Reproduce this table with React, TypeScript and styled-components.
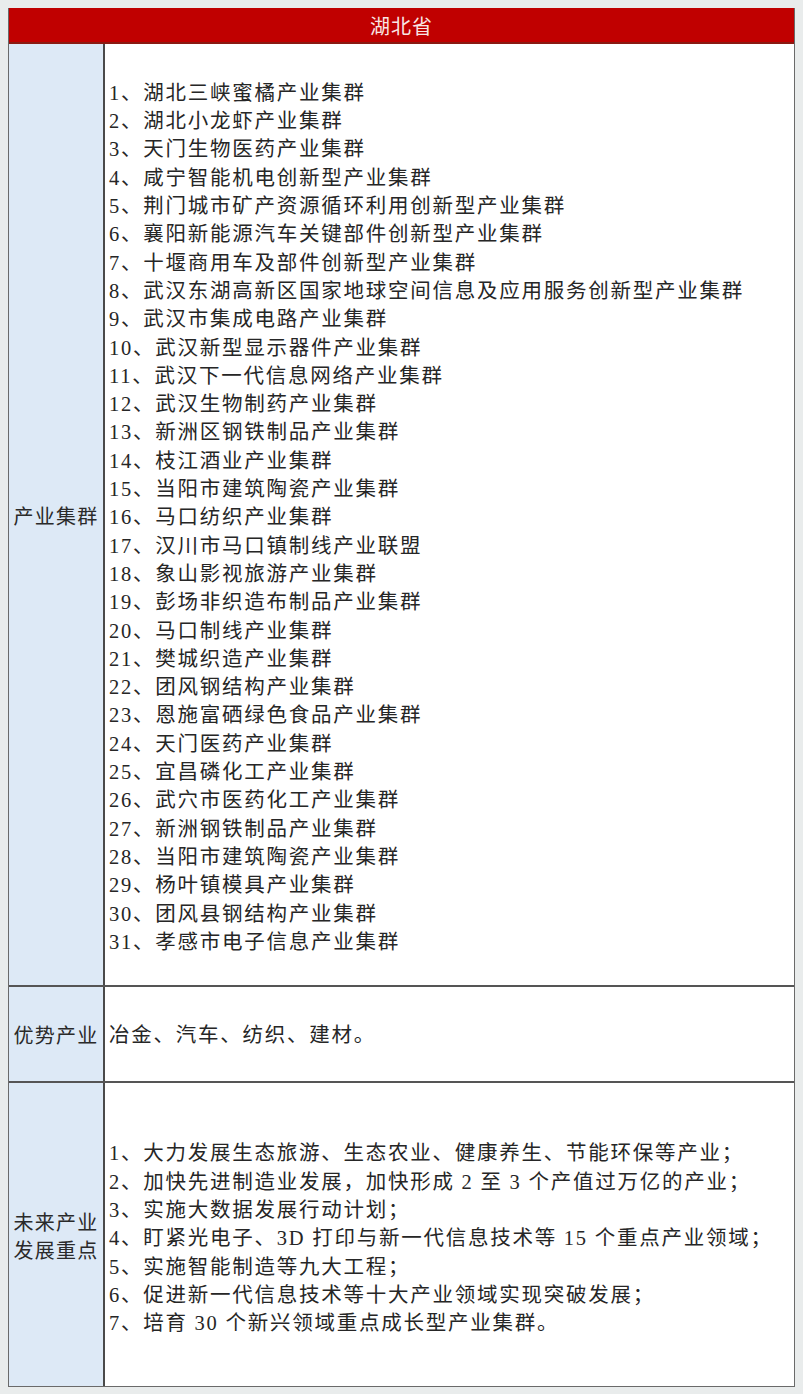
import React from 'react';
import styled, { createGlobalStyle } from 'styled-components';

const GlobalStyle = createGlobalStyle`
  html, body {
    margin: 0;
    padding: 0;
    background: #e9ecec;
  }
  body {
    font-family: "Liberation Serif", "Noto Sans CJK SC", serif;
    color: #232323;
  }
`;

const Page = styled.div`
  padding: 8px;
`;

const Table = styled.div`
  width: 787px;
  border: 1px solid #6a6a6a;
  border-top: none;
  background: #fff;
  box-sizing: border-box;
`;

const Header = styled.div`
  height: 36px;
  background: #c00000;
  border-bottom: 2px solid #8a1a12;
  box-sizing: border-box;
  display: flex;
  align-items: center;
  justify-content: center;
  color: #f8e6e4;
  font-family: "Noto Sans CJK SC", sans-serif;
  font-size: 20px;
  letter-spacing: 1px;
`;

const Row = styled.div<{ $height: number; $last?: boolean }>`
  display: grid;
  grid-template-columns: 96px 1fr;
  height: ${p => p.$height}px;
  border-bottom: ${p => (p.$last ? 'none' : '2px solid #555')};
  box-sizing: border-box;
`;

const Label = styled.div`
  background: #dde9f6;
  border-right: 2px solid #4a4a4a;
  display: flex;
  align-items: center;
  justify-content: center;
  text-align: center;
  padding-top: 2px;
  font-family: "Noto Sans CJK SC", sans-serif;
  font-size: 20px;
  line-height: 28px;
  letter-spacing: 1.3px;
  color: #2a2a2a;
`;

const Content = styled.div<{ $shift: number }>`
  display: flex;
  flex-direction: column;
  justify-content: center;
  padding-left: 4px;
  padding-top: ${p => p.$shift}px;
  font-size: 20.5px;
  line-height: 28.3px;
  letter-spacing: 1.75px;
  color: #262626;
`;

const Line = styled.div`
  white-space: nowrap;
`;

const clusters = [
  '湖北三峡蜜橘产业集群',
  '湖北小龙虾产业集群',
  '天门生物医药产业集群',
  '咸宁智能机电创新型产业集群',
  '荆门城市矿产资源循环利用创新型产业集群',
  '襄阳新能源汽车关键部件创新型产业集群',
  '十堰商用车及部件创新型产业集群',
  '武汉东湖高新区国家地球空间信息及应用服务创新型产业集群',
  '武汉市集成电路产业集群',
  '武汉新型显示器件产业集群',
  '武汉下一代信息网络产业集群',
  '武汉生物制药产业集群',
  '新洲区钢铁制品产业集群',
  '枝江酒业产业集群',
  '当阳市建筑陶瓷产业集群',
  '马口纺织产业集群',
  '汉川市马口镇制线产业联盟',
  '象山影视旅游产业集群',
  '彭场非织造布制品产业集群',
  '马口制线产业集群',
  '樊城织造产业集群',
  '团风钢结构产业集群',
  '恩施富硒绿色食品产业集群',
  '天门医药产业集群',
  '宜昌磷化工产业集群',
  '武穴市医药化工产业集群',
  '新洲钢铁制品产业集群',
  '当阳市建筑陶瓷产业集群',
  '杨叶镇模具产业集群',
  '团风县钢结构产业集群',
  '孝感市电子信息产业集群',
];

const futures = [
  '大力发展生态旅游、生态农业、健康养生、节能环保等产业；',
  '加快先进制造业发展，加快形成 2 至 3 个产值过万亿的产业；',
  '实施大数据发展行动计划；',
  '盯紧光电子、3D 打印与新一代信息技术等 15 个重点产业领域；',
  '实施智能制造等九大工程；',
  '促进新一代信息技术等十大产业领域实现突破发展；',
  '培育 30 个新兴领域重点成长型产业集群。',
];

export default function App() {
  return (
    <Page>
      <GlobalStyle />
      <Table>
        <Header>湖北省</Header>
        <Row $height={943}>
          <Label>产业集群</Label>
          <Content $shift={6}>
            {clusters.map((c, i) => (
              <Line key={i}>{`${i + 1}、${c}`}</Line>
            ))}
          </Content>
        </Row>
        <Row $height={96}>
          <Label>优势产业</Label>
          <Content $shift={2}>
            <Line>冶金、汽车、纺织、建材。</Line>
          </Content>
        </Row>
        <Row $height={303} $last>
          <Label>
            未来产业
            <br />
            发展重点
          </Label>
          <Content $shift={8}>
            {futures.map((f, i) => (
              <Line key={i}>{`${i + 1}、${f}`}</Line>
            ))}
          </Content>
        </Row>
      </Table>
    </Page>
  );
}
